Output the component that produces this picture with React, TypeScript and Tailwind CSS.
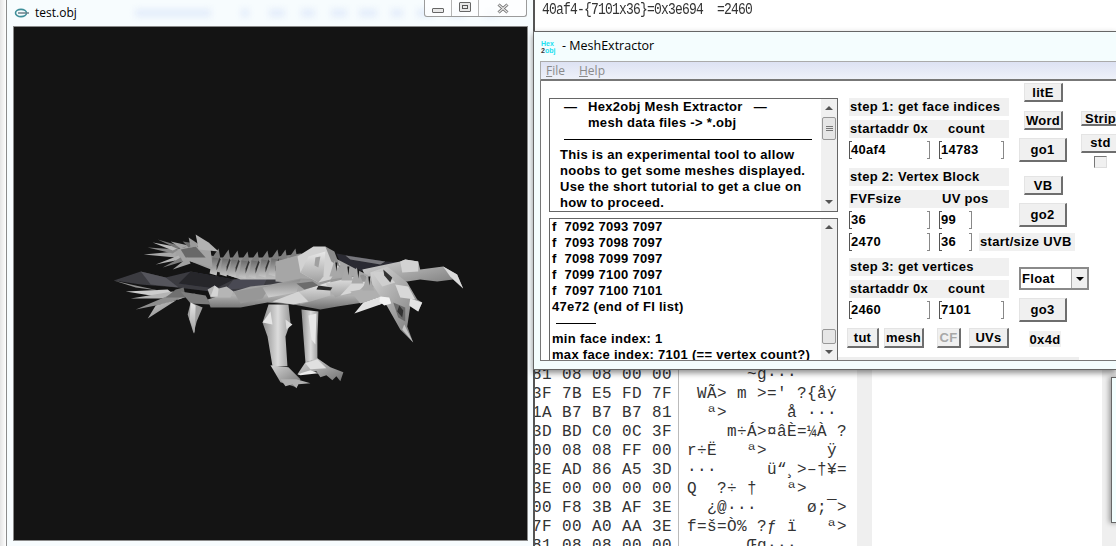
import type { ReactNode } from "react";

const hexRows = [
  "81 08 08 00 00",
  "3F 7B E5 FD 7F",
  "1A B7 B7 B7 81",
  "3D BD C0 0C 3F",
  "00 08 08 FF 00",
  "3E AD 86 A5 3D",
  "3E 00 00 00 00",
  "00 F8 3B AF 3E",
  "7F 00 A0 AA 3E",
  "81 08 08 00 00",
];

const asciiRows = [
  "      ~g···",
  " WÃ> m >=' ?{åý",
  "  ª>      å ···",
  "    m÷Á>¤âÈ=¼À ?",
  "r÷Ë   ª>      ÿ",
  "···     ü“¸>–†¥=",
  "Q  ?÷ †   ª>",
  "  ¿@···     ø;¯>",
  "f=š=Ò% ?ƒ ï   ª>",
  "      Œg···",
];

const faceRows = [
  "f  7092 7093 7097",
  "f  7093 7098 7097",
  "f  7098 7099 7097",
  "f  7099 7100 7097",
  "f  7097 7100 7101",
  "47e72 (end of FI list)",
];

// blurred text of whatever sits behind the glass title bar: [gap before, width]
const glassBlobs = [
  [58, 76],
  [30, 8],
  [20, 16],
  [16, 14],
  [16, 16],
  [12, 18],
  [14, 12],
  [14, 16],
  [17, 14],
  [20, 14],
];

type Poly = [string, string];

// dragon facets, in page coordinates
const backPolys: Poly[] = [
  // dark wing behind the body
  ["113,281 140,272 165,278 190,272 233,280 267,278 300,276 320,282 300,288 250,292 210,292 177,288 140,285", "#3a3a41"],
  ["190,272 233,280 215,289 178,284", "#25252b"],
  ["140,272 165,278 178,288 150,285", "#55555b"],
  ["233,280 267,278 262,288 225,290", "#4a4a52"],
  // dark top of the far wing
  ["336,254 360,258 385,262 402,263 398,272 365,272 342,268", "#2a2a30"],
  ["345,256 385,262 380,265 350,260", "#77777c"],
  // far wing arm out to the right
  ["362,270 400,262 405,260 418,262 420,270 443,267 457,275 463,289 453,280 437,282 420,280 407,282 385,285 368,284", "url(#softD)"],
  ["400,262 405,260 418,262 418,272 402,273", "#d2d2d2"],
  ["443,267 457,275 463,289 450,277", "#dadada"],
];

const bandPoly = "196,252 218,258 240,258 270,258 300,254 312,256 322,272 300,280 270,280 240,280 213,271 190,262";

const massPolys: Poly[] = [
  // everything between the band and the main body
  ["275,262 318,250 345,264 368,276 340,284 300,284 275,282", "#a6a6a6"],
  // main body
  ["207,300 233,292 250,287 270,285 300,279 330,280 363,275 377,287 380,297 363,303 337,307 320,310 293,305 267,303 240,308 210,308", "url(#body)"],
  ["233,292 270,286 262,299 240,304", "#979797"],
  ["262,288 300,280 296,293 268,298", "url(#darkV)"],
  ["296,293 330,282 330,296 300,305", "url(#lightV)"],
  ["325,284 360,276 350,292 335,298", "url(#lightV)"],
  ["296,284 312,282 318,286 304,290", "#6c6c6c"],
  ["318,286 332,288 330,291 316,290", "#2c2c2c"],
  ["340,296 352,283 368,282 358,292", "#d6d6d6"],
  ["350,292 377,287 380,297 360,304", "#b0b0b0"],
  ["272,302 298,292 308,302 293,305", "#d4d4d4"],
  // scale tuft over the wing
  ["207,290 214,286 218,289 226,287 233,292 230,298 210,298", "#b5b5b5"],
  ["214,286 218,289 217,297 210,297", "#d4d4d4"],
  // shoulder
  ["297,257 313,247 325,247 330,253 340,265 330,280 318,283 300,273", "#d2d2d2"],
  ["308,257 325,252 323,277 318,283 300,273", "url(#lightV)"],
  ["315,258 320,257 318,268 314,266", "#a0a0a0"],
  ["325,247 334,252 340,268 331,262", "#8a8a8a"],
  // left claws
  ["167,290 125,292 150,296 172,294", "#cdcdcd"],
  ["113,281 130,285 158,291 135,288", "#8f8f8f"],
  ["172,292 130,299 160,299 180,296", "#b4b4b4"],
  ["175,293 135,310 165,304 183,298", "#8d8d8d"],
  ["183,296 147,319 155,306 178,300 195,294", "url(#softD)"],
  ["165,298 175,290 183,288 185,298", "#707070"],
  ["180,292 205,296 210,305 190,304", "#7d7d7d"],
  // big claw
  ["187,315 190,303 202,308 196,322 193,334", "#9f9f9f"],
  ["190,303 195,306 194,334 189,320", "url(#lightV)"],
  // front leg
  ["268,305 288,305 290,323 285,337 287,367 272,367 267,337 262,323", "url(#midH)"],
  ["262,323 270,312 272,325", "#e6e6e6"],
  ["285,320 292,325 286,330", "#dcdcdc"],
  // rear leg
  ["301,310 318,312 317,337 317,360 305,363 303,337", "url(#midH)"],
  ["308,316 316,314 315,345 311,340", "#e8e8e8"],
  // feet
  ["270,366 288,368 300,380 296,388 280,383", "url(#softD)"],
  ["280,380 296,380 310,384 298,385 296,389 292,385 285,387", "#b0b0b0"],
  ["297,375 305,363 317,359 330,368 343,373 340,382 336,377 332,381 326,376 320,378 316,372", "url(#softD)"],
  ["305,364 317,360 326,369 310,370", "#e0e0e0"],
  ["297,375 310,371 318,374 300,376", "#ececec"],
  // head
  ["370,273 387,267 407,283 417,300 422,303 418,312 410,307 407,327 413,343 400,330 387,307 380,297 372,285", "url(#softD)"],
  ["372,273 384,272 395,283 382,287", "#cfcfcf"],
  ["383,270 392,278 390,283 384,276", "#333333"],
  ["395,285 408,287 415,300 400,298", "#d8d8d8"],
  ["393,303 405,308 405,322 398,318", "#6b6b6b"],
  ["399,306 403,311 402,318 397,312", "#303030"],
  ["404,325 413,343 402,330", "#c4c4c4"],
  ["410,299 422,303 418,312 409,306", "#e4e4e4"],
  // horn
  ["354,314 363,303 380,297 390,300 380,305", "#e2e2e2"],
  ["380,297 389,298 391,304 384,306 379,302", "#f2f2f2"],
];

const bandSpikes: [number, number][] = [
  [218, 249], [228, 250], [237, 251], [247, 252], [257, 252], [267, 251],
  [277, 250], [285, 250], [295, 249],
];

const neckSpikes: [number, number][] = [
  [335, 263], [347, 267], [357, 270], [368, 277],
];

const headPolys: Poly[] = [
  ["170,252 190,245 210,250 212,268 190,262 175,262", "#a3a3a3"],
  ["180,250 195,247 205,258 185,258", "#686868"],
  ["143,255 175,252 175,258", "#a8a8a8"],
  ["147,248 178,250 172,254", "#8a8a8a"],
  ["152,243 180,248 172,251", "#bcbcbc"],
  ["157,240 185,248 176,249", "#787878"],
  ["170,242 188,246 180,249", "#a4a4a4"],
  ["182,242 195,244 188,248", "#6e6e6e"],
  ["188,238 200,246 190,248", "#9a9a9a"],
  ["195,235 208,243 218,252 198,250", "#b2b2b2"],
  ["155,265 178,256 180,260", "#b4b4b4"],
  ["172,270 187,258 190,264", "#a2a2a2"],
  ["162,268 180,258 182,262", "#7e7e7e"],
];

function Facets({ polys }: { polys: Poly[] }) {
  return (
    <>
      {polys.map(([p, f]) => (
        <polygon key={p} points={p} fill={f} />
      ))}
    </>
  );
}

function Dragon() {
  return (
    <svg viewBox="13 27 514 514" className="w-full h-full block">
      <defs>
        <filter id="soft" x="-5%" y="-5%" width="110%" height="110%">
          <feGaussianBlur stdDeviation="0.45" />
        </filter>
        <linearGradient id="band" x1="0" y1="0" x2="0" y2="1">
          <stop offset="0" stopColor="#7a7a7a" />
          <stop offset="1" stopColor="#bdbdbd" />
        </linearGradient>
        <linearGradient id="body" x1="0" y1="0" x2="0" y2="1">
          <stop offset="0" stopColor="#8f8f8f" />
          <stop offset="0.6" stopColor="#b0b0b0" />
          <stop offset="1" stopColor="#6e6e6e" />
        </linearGradient>
        <linearGradient id="lightV" x1="0" y1="0" x2="0" y2="1">
          <stop offset="0" stopColor="#e8e8e8" />
          <stop offset="1" stopColor="#a0a0a0" />
        </linearGradient>
        <linearGradient id="darkV" x1="0" y1="0" x2="0" y2="1">
          <stop offset="0" stopColor="#8a8a8a" />
          <stop offset="1" stopColor="#cfcfcf" />
        </linearGradient>
        <linearGradient id="midH" x1="0" y1="0" x2="1" y2="0">
          <stop offset="0" stopColor="#8c8c8c" />
          <stop offset="0.55" stopColor="#dcdcdc" />
          <stop offset="1" stopColor="#9a9a9a" />
        </linearGradient>
        <linearGradient id="softD" x1="0" y1="0" x2="1" y2="1">
          <stop offset="0" stopColor="#d4d4d4" />
          <stop offset="1" stopColor="#727272" />
        </linearGradient>
        <linearGradient id="rib" x1="0" y1="0" x2="0" y2="1">
          <stop offset="0" stopColor="#6a6a6a" />
          <stop offset="1" stopColor="#c8c8c8" />
        </linearGradient>
      </defs>
      <g filter="url(#soft)">
        <Facets polys={backPolys} />
        <polygon points={bandPoly} fill="url(#band)" />
        {bandSpikes.map(([x, y]) => (
          <g key={x}>
            <polygon points={`${x - 7},${y + 10} ${x},${y} ${x + 2},${y + 11}`} fill="#7d7d7d" />
            <polygon points={`${x - 6},${y + 9} ${x + 1},${y + 10} ${x - 2},${y + 27} ${x - 9},${y + 25}`} fill="url(#rib)" />
            <polygon points={`${x + 1},${y + 9} ${x + 2},${y + 11} ${x - 2},${y + 22} ${x - 2},${y + 17}`} fill="#333333" />
          </g>
        ))}
        <Facets polys={headPolys} />
        <Facets polys={massPolys} />
        {neckSpikes.map(([x, y]) => (
          <g key={x}>
            <polygon points={`${x - 6},${y + 14} ${x - 1},${y - 2} ${x + 6},${y + 14}`} fill="#a8a8a8" />
            <polygon points={`${x},${y} ${x + 2},${y} ${x + 1},${y + 9}`} fill="#141414" />
          </g>
        ))}
      </g>
    </svg>
  );
}

function Scrollbar({ top, height, grip }: { top: number; height: number; grip?: boolean }) {
  return (
    <div className="w-[16px] shrink-0 bg-[#f0f0f0] flex flex-col items-center">
      <div className="h-[18px] flex items-center justify-center">
        <div className="w-0 h-0 border-x-[4px] border-b-[4px] border-x-transparent border-b-[#555]" />
      </div>
      <div className="flex-1 w-full px-px">
        <div
          className="w-full border border-[#989898] rounded-[2px] bg-[#e6e6e6] flex flex-col items-center justify-center gap-px"
          style={{ marginTop: top, height }}
        >
          {grip && (
            <>
              <div className="w-[7px] h-px bg-[#777]" />
              <div className="w-[7px] h-px bg-[#777]" />
              <div className="w-[7px] h-px bg-[#777]" />
            </>
          )}
        </div>
      </div>
      <div className="h-[18px] flex items-center justify-center">
        <div className="w-0 h-0 border-x-[4px] border-t-[4px] border-x-transparent border-t-[#555]" />
      </div>
    </div>
  );
}

function Label({ children, className = "w-[160px]" }: { children: ReactNode; className?: string }) {
  return (
    <div className={`h-[18px] shrink-0 bg-[#f0f0f0] flex items-center pl-px pb-[2px] leading-none whitespace-pre ${className}`}>
      {children}
    </div>
  );
}

function Field({ value, className }: { value: string; className: string }) {
  return (
    <div className={`relative h-[18px] shrink-0 border-l border-r border-l-[#555] border-r-[#888] pl-px leading-[18px] ${className}`}>
      {value}
      <div className="absolute left-0 top-0 w-[2px] h-px bg-[#555]" />
      <div className="absolute left-0 bottom-0 w-[2px] h-px bg-[#555]" />
      <div className="absolute right-0 top-0 w-[2px] h-px bg-[#888]" />
      <div className="absolute right-0 bottom-0 w-[2px] h-px bg-[#888]" />
    </div>
  );
}

function Btn({ children, className }: { children: ReactNode; className: string }) {
  return (
    <div className={`shrink-0 bg-[#f0f0f0] border-t border-l border-t-[#e4e4e4] border-l-[#e4e4e4] border-r-2 border-b-2 border-r-[#6e6e6e] border-b-[#6e6e6e] flex items-center justify-center leading-none whitespace-nowrap overflow-hidden ${className}`}>
      {children}
    </div>
  );
}

function HexEditor() {
  return (
    <div className="absolute left-[533px] top-0 w-[583px] h-[546px] bg-white border-l-2 border-[#555] overflow-hidden font-['Liberation_Mono',monospace]">
      <div className="h-[20px] pl-[7px] text-[13px] leading-[18px] tracking-[-0.8px] text-[#333] whitespace-pre origin-top scale-y-[1.2]">
        {"40af4-{7101x36}=0x3e694  =2460"}
      </div>
      <div className="mt-[346px] flex text-[16px] tracking-[0.4px] leading-[19px] text-[#333] h-[180px]">
        <div className="w-[143px] shrink-0 overflow-hidden">
          <div className="-ml-[3px] whitespace-pre">
            {hexRows.map((r, i) => (
              <div key={i}>{r}</div>
            ))}
          </div>
        </div>
        <div className="w-[179px] shrink-0 border-l border-[#bbb] pl-[8px] whitespace-pre">
          {asciiRows.map((r, i) => (
            <div key={i}>{r}</div>
          ))}
        </div>
        <div className="w-[15px] shrink-0 bg-[#efefef]" />
        <div className="w-[230px] shrink-0 bg-white" />
        <div className="flex-1 bg-[#efefef]" />
      </div>
      <div className="absolute left-[576px] top-[377px] w-[10px] h-[146px] bg-[#f3ffff] border border-[#666] shadow-[-2px_0_5px_rgba(0,0,0,0.35)]" />
    </div>
  );
}

function ObjWindow() {
  return (
    <div className="absolute left-0 top-0 w-[533px] h-[546px] bg-[linear-gradient(90deg,#e4e4e4,#ffffff_6px)] pl-[6px]">
      <div className="h-full border-l border-[#8c8c8c] bg-[#f7fcfe] pl-[6px] pr-[6px]">
        <div className="relative h-[26px] flex items-center">
          <svg viewBox="0 0 16 10" className="w-[16px] h-[10px] ml-px shrink-0">
            <ellipse cx="7" cy="5" rx="5.5" ry="3.6" fill="none" stroke="#3f8f9a" strokeWidth="1.6" />
            <path d="M4 5h11" stroke="#6b7f88" strokeWidth="1.5" />
          </svg>
          <span className="ml-[5px] text-[12px] font-['Open_Sans',sans-serif] text-black">test.obj</span>
          <div className="flex items-center">
            {glassBlobs.map(([gap, w], i) => (
              <div key={i} className="h-[8px] bg-[#e4edfb] blur-[3px]" style={{ marginLeft: gap, width: w }} />
            ))}
          </div>
          <div className="absolute right-0 top-0 w-[103px] h-[17px] flex bg-white/80 border border-t-0 border-[#9b9b9b] rounded-b-[3px]">
            <div className="w-[27px] border-r border-[#b5b5b5] flex items-center justify-center pt-[5px]">
              <div className="w-[12px] h-[5px] border border-[#666] rounded-[1px] bg-[#e8e8e8]" />
            </div>
            <div className="w-[27px] border-r border-[#b5b5b5] flex items-start justify-center pt-[2px]">
              <div className="w-[12px] h-[10px] border border-[#666] rounded-[1px] bg-[#e8e8e8] flex items-center justify-center">
                <div className="w-[6px] h-[4px] border border-[#555]" />
              </div>
            </div>
            <div className="flex-1 flex items-center justify-center">
              <svg viewBox="0 0 12 11" className="w-[12px] h-[11px]">
                <path d="M1.5 1.5 10.5 9.5M10.5 1.5 1.5 9.5" stroke="#666" strokeWidth="3" />
                <path d="M1.5 1.5 10.5 9.5M10.5 1.5 1.5 9.5" stroke="#e8e8e8" strokeWidth="1.2" />
              </svg>
            </div>
          </div>
        </div>
        <div className="w-[515px] h-[515px] border border-[#8a8a8a] bg-[#141414]">
          <Dragon />
        </div>
      </div>
    </div>
  );
}

function MeshWindow() {
  return (
    <div className="absolute left-[533px] top-[31px] w-[583px] h-[339px] border-y border-l border-[#666] bg-[#f4fdfe] shadow-[0_3px_6px_rgba(0,0,0,0.45)] pl-[6px] flex flex-col">
      <div className="h-[29px] shrink-0 flex items-center font-['Open_Sans',sans-serif]">
        <div className="w-[17px] ml-px text-[7px] leading-[7px] font-bold font-['Liberation_Sans',sans-serif] text-[#22e0f0]">
          <div>Hex</div>
          <div>
            <span className="text-[#333]">2</span>obj
          </div>
        </div>
        <span className="ml-[4px] text-[12.5px] text-black">- MeshExtractor</span>
      </div>
      <div className="h-[20px] shrink-0 flex items-center gap-[14px] pl-[5px] border-t border-b-2 border-t-[#aaa] border-b-[#777] border-l border-l-[#aaa] bg-[linear-gradient(180deg,#dde2f3,#eef1f9)] text-[12px] text-[#8a8a8a] font-['Open_Sans',sans-serif]">
        <span>
          <span className="underline">F</span>ile
        </span>
        <span>
          <span className="underline">H</span>elp
        </span>
      </div>
      <div className="relative h-[280px] shrink-0 flex bg-white border-l border-b border-[#777] text-[13px] font-bold tracking-[0.3px] text-black overflow-hidden font-['Liberation_Sans',sans-serif]">
        <div className="w-[297px] shrink-0 pl-[8px] pt-[17px] flex flex-col">
          <div className="h-[114px] shrink-0 border border-[#666] flex">
            <div className="flex-1 pl-[10px] leading-[16px] overflow-hidden whitespace-pre">
              <div className="flex">
                <span className="ml-[4px] w-[24px]">—</span>
                <span>Hex2obj Mesh Extractor</span>
                <span className="ml-[11px]">—</span>
              </div>
              <div className="pl-[28px]">{"mesh data files -> *.obj"}</div>
              <div className="h-[16px] flex items-center pl-[4px]">
                <div className="w-[248px] h-px bg-black" />
              </div>
              <div>This is an experimental tool to allow</div>
              <div>noobs to get some meshes displayed.</div>
              <div>Use the short tutorial to get a clue on</div>
              <div>how to proceed.</div>
            </div>
            <Scrollbar top={0} height={23} grip />
          </div>
          <div className="mt-[6px] flex-1 border-t border-l border-r border-[#666] flex min-h-0">
            <div className="flex-1 pl-[2px] leading-[16px] overflow-hidden whitespace-pre">
              {faceRows.map((r) => (
                <div key={r}>{r}</div>
              ))}
              <div className="h-[16px] flex items-center pl-[4px]">
                <div className="w-[40px] h-px bg-black" />
              </div>
              <div>min face index: 1</div>
              <div>max face index: 7101 (== vertex count?)</div>
            </div>
            <Scrollbar top={93} height={15} />
          </div>
        </div>

        <div className="ml-[11px] w-[160px] shrink-0 pt-[17px] flex flex-col">
          <Label>step 1: get face indices</Label>
          <Label className="w-[160px] mt-[4px]">
            <span className="w-[98px]">startaddr 0x</span>count
          </Label>
          <div className="mt-[3px] flex gap-[9px]">
            <Field value="40af4" className="w-[81px]" />
            <Field value="14783" className="w-[65px]" />
          </div>
          <Label className="w-[160px] mt-[9px]">step 2: Vertex Block</Label>
          <Label className="w-[160px] mt-[4px]">
            <span className="w-[92px]">FVFsize</span>UV pos
          </Label>
          <div className="mt-[3px] flex gap-[9px]">
            <Field value="36" className="w-[81px]" />
            <Field value="99" className="w-[33px]" />
          </div>
          <div className="mt-[4px] flex">
            <Field value="2470" className="w-[81px]" />
            <Field value="36" className="w-[33px] ml-[9px]" />
            <Label className="w-[96px] ml-[7px]">start/size UVB</Label>
          </div>
          <Label className="w-[160px] mt-[7px]">step 3: get vertices</Label>
          <Label className="w-[160px] mt-[4px]">
            <span className="w-[98px]">startaddr 0x</span>count
          </Label>
          <div className="mt-[3px] flex gap-[9px]">
            <Field value="2460" className="w-[81px]" />
            <Field value="7101" className="w-[65px]" />
          </div>
          <div className="mt-[9px] -ml-[2px] flex">
            <Btn className="w-[32px] h-[20px]">tut</Btn>
            <Btn className="w-[40px] h-[20px] ml-[5px]">mesh</Btn>
            <Btn className="w-[24px] h-[20px] ml-[13px] text-[#a8a8a8]">CF</Btn>
            <Btn className="w-[40px] h-[20px] ml-[8px]">UVs</Btn>
          </div>
        </div>

        <div className="ml-[10px] w-[62px] shrink-0 pt-[2px] flex flex-col">
          <Btn className="w-[39px] h-[19px] ml-[5px]">litE</Btn>
          <Btn className="w-[39px] h-[19px] ml-[5px] mt-[9px]">Word</Btn>
          <Btn className="w-[48px] h-[24px] mt-[8px]">go1</Btn>
          <Btn className="w-[39px] h-[19px] ml-[5px] mt-[14px]">VB</Btn>
          <Btn className="w-[48px] h-[24px] mt-[8px]">go2</Btn>
          <div className="w-[70px] h-[23px] shrink-0 mt-[40px] border-2 border-[#8a8a8a] bg-white flex items-center pl-px justify-between">
            <span>Float</span>
            <div className="w-[16px] h-full bg-[#efefef] border-l border-[#aaa] flex items-center justify-center">
              <div className="w-0 h-0 border-x-[4px] border-t-[4px] border-x-transparent border-t-black" />
            </div>
          </div>
          <Btn className="w-[48px] h-[24px] mt-[8px]">go3</Btn>
          <div className="w-[32px] h-[16px] ml-[10px] mt-[9px] bg-[#f0f0f0] flex items-center justify-center leading-none">0x4d</div>
        </div>

        <div className="w-[40px] shrink-0 pt-[30px] flex flex-col">
          <Btn className="w-[40px] h-[15px]">Strip</Btn>
          <Btn className="w-[40px] h-[19px] mt-[8px] pb-px">std</Btn>
          <div className="w-[13px] h-[12px] ml-[13px] mt-[3px] border border-t-[#777] border-l-[#777] border-r-[#ddd] border-b-[#ddd] bg-[#f0f0f0]" />
        </div>

        <div className="absolute left-[297px] bottom-0 w-[241px] h-[3px] bg-[#eeeeee]" />
      </div>
    </div>
  );
}

export default function App() {
  return (
    <div className="relative w-[1116px] h-[546px] overflow-hidden bg-white">
      <HexEditor />
      <ObjWindow />
      <MeshWindow />
    </div>
  );
}
